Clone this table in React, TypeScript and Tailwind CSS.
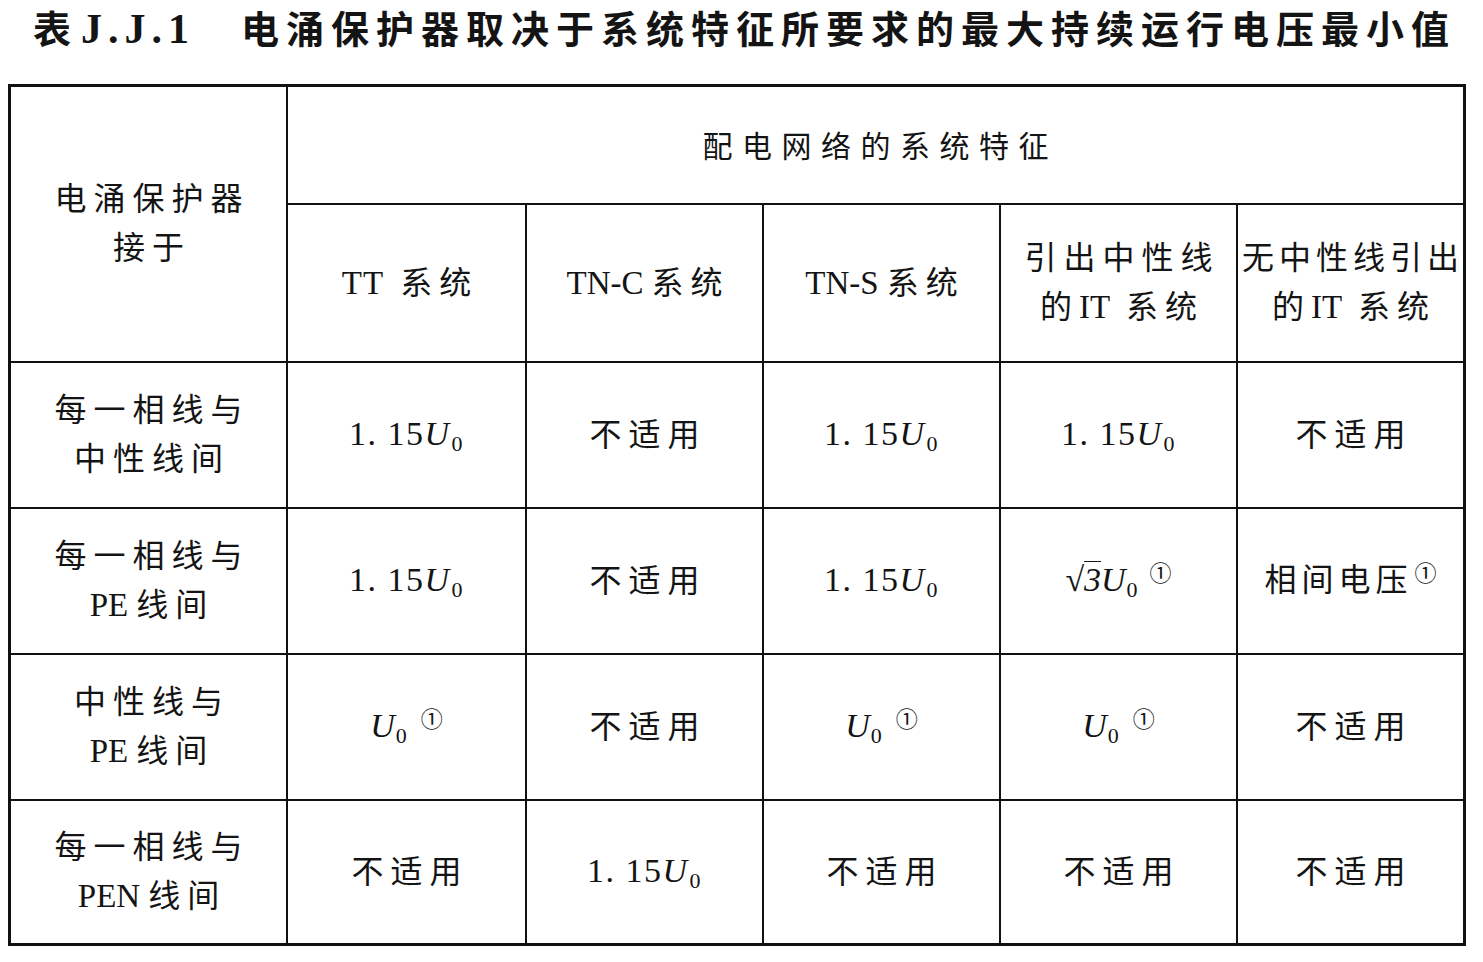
import React from "react";

const U0 = () => (
  <span className="whitespace-nowrap">
    <i className="font-['Liberation_Serif',serif]">U</i>
    <span className="text-[22px] relative top-[6px] ml-[1px]">0</span>
  </span>
);

const Note = () => (
  <span className="text-[22px] relative -top-[10px] ml-[2px] font-['Noto_Sans_CJK_SC',sans-serif]">①</span>
);

const V115 = () => (
  <span className="whitespace-nowrap tracking-[1.5px] text-[34px]">
    1.&nbsp;15
    <U0 />
  </span>
);

const Cn = ({ children, last = true }: { children: React.ReactNode; last?: boolean }) => (
  <span className={"tracking-[7px] " + (last ? "mr-[-7px]" : "")}>{children}</span>
);

const NA = () => <Cn>不适用</Cn>;

const Cell = ({ className = "", children }: { className?: string; children?: React.ReactNode }) => (
  <div className={"bg-white flex flex-col items-center justify-center text-center leading-[49px] overflow-hidden " + className}>
    {children}
  </div>
);

const Line = ({ children }: { children: React.ReactNode }) => <div className="whitespace-nowrap">{children}</div>;

export default function App() {
  return (
    <div className="w-[1483px] h-[962px] bg-white text-[#141414] relative overflow-hidden">
      <div className="flex items-start pt-[8px] pl-[33px] h-[84px] font-bold leading-none text-[38px]">
        <span className="font-['Noto_Sans_CJK_SC',sans-serif]">表</span>
        <span className="ml-[10px] font-['Liberation_Serif',serif] tracking-[6px] text-[42px]">J.J.1</span>
        <span className="ml-[46px] font-['Noto_Sans_CJK_SC',sans-serif] tracking-[7px] whitespace-nowrap">
          电涌保护器取决于系统特征所要求的最大持续运行电压最小值
        </span>
      </div>
      <div className="ml-[8px] w-[1458px] h-[862px] bg-[#111] p-[3px] grid gap-[2px] grid-cols-[275px_237px_235px_235px_235px_225px] grid-rows-[116px_156px_144px_144px_144px_142px] font-['Liberation_Serif','Noto_Sans_CJK_SC',serif] text-[32px]">
        <Cell className="row-span-2">
          <Line><Cn>电涌保护器</Cn></Line>
          <Line><Cn>接于</Cn></Line>
        </Cell>
        <Cell className="col-span-5">
          <div className="text-[30px] tracking-[9.5px] mr-[-9.5px] mt-[2px] whitespace-nowrap">配电网络的系统特征</div>
        </Cell>
        <Cell>
          <Line><span className="tracking-[1px] text-[33px]">TT</span>&nbsp;&nbsp;<Cn>系统</Cn></Line>
        </Cell>
        <Cell>
          <Line><span className="text-[33px]">TN-C</span>&nbsp;<Cn>系统</Cn></Line>
        </Cell>
        <Cell>
          <Line><span className="text-[33px]">TN-S</span>&nbsp;<Cn>系统</Cn></Line>
        </Cell>
        <Cell>
          <Line><Cn>引出中性线</Cn></Line>
          <Line><Cn last={false}>的</Cn><span className="text-[33px]">IT</span>&nbsp;&nbsp;<Cn>系统</Cn></Line>
        </Cell>
        <Cell>
          <Line><span className="tracking-[5px] mr-[-5px]">无中性线引出</span></Line>
          <Line><Cn last={false}>的</Cn><span className="text-[33px]">IT</span>&nbsp;&nbsp;<Cn>系统</Cn></Line>
        </Cell>

        {/* Row 1 */}
        <Cell>
          <Line><Cn>每一相线与</Cn></Line>
          <Line><Cn>中性线间</Cn></Line>
        </Cell>
        <Cell><V115 /></Cell>
        <Cell><NA /></Cell>
        <Cell><V115 /></Cell>
        <Cell><V115 /></Cell>
        <Cell><NA /></Cell>

        {/* Row 2 */}
        <Cell>
          <Line><Cn>每一相线与</Cn></Line>
          <Line><span className="text-[33px]">PE</span>&nbsp;<Cn>线间</Cn></Line>
        </Cell>
        <Cell><V115 /></Cell>
        <Cell><NA /></Cell>
        <Cell><V115 /></Cell>
        <Cell>
          <span className="whitespace-nowrap text-[34px]">
            <span>√</span>
            <i className="border-t-[1.5px] border-[#141414] leading-none inline-block pt-[1px]">3</i>
            <U0 />
            <span className="ml-[10px]"><Note /></span>
          </span>
        </Cell>
        <Cell>
          <span className="whitespace-nowrap">
            <span className="tracking-[5px]">相间电压</span>
            <Note />
          </span>
        </Cell>

        {/* Row 3 */}
        <Cell>
          <Line><Cn>中性线与</Cn></Line>
          <Line><span className="text-[33px]">PE</span>&nbsp;<Cn>线间</Cn></Line>
        </Cell>
        <Cell>
          <span className="whitespace-nowrap text-[34px]"><U0 /><span className="ml-[12px]"><Note /></span></span>
        </Cell>
        <Cell><NA /></Cell>
        <Cell>
          <span className="whitespace-nowrap text-[34px]"><U0 /><span className="ml-[12px]"><Note /></span></span>
        </Cell>
        <Cell>
          <span className="whitespace-nowrap text-[34px]"><U0 /><span className="ml-[12px]"><Note /></span></span>
        </Cell>
        <Cell><NA /></Cell>

        {/* Row 4 */}
        <Cell>
          <Line><Cn>每一相线与</Cn></Line>
          <Line><span className="text-[33px]">PEN</span>&nbsp;<Cn>线间</Cn></Line>
        </Cell>
        <Cell><NA /></Cell>
        <Cell><V115 /></Cell>
        <Cell><NA /></Cell>
        <Cell><NA /></Cell>
        <Cell><NA /></Cell>
      </div>
    </div>
  );
}
